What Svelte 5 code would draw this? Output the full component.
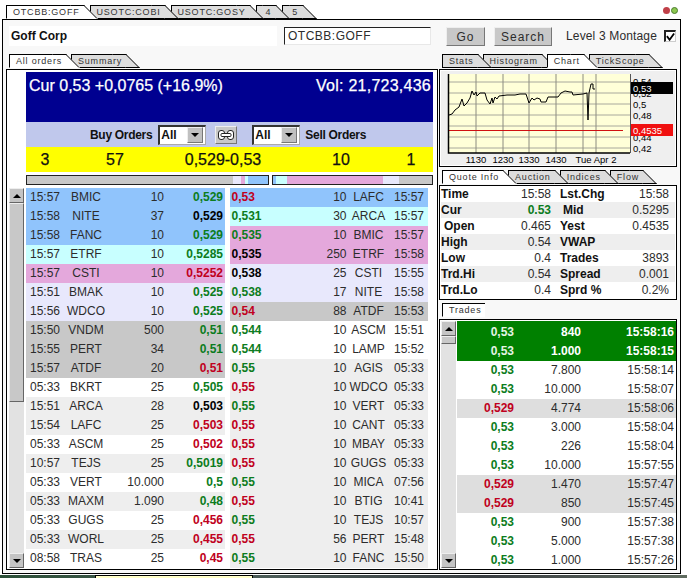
<script>
  const topTabs = ['OTCBB:GOFF', 'USOTC:COBI', 'USOTC:GOSY', '4', '5'];
  const chartTabs = ['Stats', 'Histogram', 'Chart', 'TickScope'];
  const quoteTabs = ['Quote Info', 'Auction', 'Indices', 'Flow'];

  // g = green, r = red, k = black
  const buys = [
    ['15:57', 'BMIC', '10', '0,529', 'g', 'blue'],
    ['15:58', 'NITE', '37', '0,529', 'k', 'blue'],
    ['15:58', 'FANC', '10', '0,529', 'g', 'blue'],
    ['15:57', 'ETRF', '10', '0,5285', 'g', 'cyan'],
    ['15:57', 'CSTI', '10', '0,5252', 'r', 'pink'],
    ['15:51', 'BMAK', '10', '0,525', 'g', 'lav'],
    ['15:56', 'WDCO', '10', '0,525', 'g', 'lav'],
    ['15:50', 'VNDM', '500', '0,51', 'g', 'gray'],
    ['15:55', 'PERT', '34', '0,51', 'g', 'gray'],
    ['15:57', 'ATDF', '20', '0,51', 'r', 'gray'],
    ['05:33', 'BKRT', '25', '0,505', 'g', 'white'],
    ['15:51', 'ARCA', '28', '0,503', 'k', 'alt'],
    ['15:54', 'LAFC', '25', '0,503', 'r', 'alt'],
    ['05:33', 'ASCM', '25', '0,502', 'r', 'white'],
    ['10:57', 'TEJS', '25', '0,5019', 'g', 'alt'],
    ['05:33', 'VERT', '10.000', '0,5', 'g', 'white'],
    ['05:33', 'MAXM', '1.090', '0,48', 'g', 'alt'],
    ['05:33', 'GUGS', '25', '0,456', 'r', 'white'],
    ['05:33', 'WORL', '25', '0,455', 'r', 'alt'],
    ['08:58', 'TRAS', '25', '0,45', 'r', 'white']
  ];

  const sells = [
    ['0,53', 'r', '10', 'LAFC', '15:57', 'blue'],
    ['0,531', 'g', '30', 'ARCA', '15:57', 'cyan'],
    ['0,535', 'g', '10', 'BMIC', '15:57', 'pink'],
    ['0,535', 'k', '250', 'ETRF', '15:58', 'pink'],
    ['0,538', 'k', '25', 'CSTI', '15:55', 'lav'],
    ['0,538', 'g', '17', 'NITE', '15:58', 'lav'],
    ['0,54', 'r', '88', 'ATDF', '15:53', 'gray'],
    ['0,544', 'g', '10', 'ASCM', '15:51', 'white'],
    ['0,544', 'g', '10', 'LAMP', '15:52', 'white'],
    ['0,55', 'g', '10', 'AGIS', '05:33', 'alt'],
    ['0,55', 'r', '10', 'WDCO', '05:33', 'alt'],
    ['0,55', 'g', '10', 'VERT', '05:33', 'alt'],
    ['0,55', 'r', '10', 'CANT', '05:33', 'alt'],
    ['0,55', 'r', '10', 'MBAY', '05:33', 'alt'],
    ['0,55', 'r', '10', 'GUGS', '05:33', 'alt'],
    ['0,55', 'g', '10', 'MICA', '07:56', 'alt'],
    ['0,55', 'r', '10', 'BTIG', '10:41', 'alt'],
    ['0,55', 'g', '10', 'TEJS', '10:57', 'alt'],
    ['0,55', 'r', '56', 'PERT', '15:48', 'alt'],
    ['0,55', 'g', '10', 'FANC', '15:50', 'alt']
  ];

  const quote = [
    ['Time', '15:58', 'Lst.Chg', '15:58'],
    ['Cur', '0.53', 'Mid', '0.5295'],
    ['Open', '0.465', 'Yest', '0.4535'],
    ['High', '0.54', 'VWAP', ''],
    ['Low', '0.4', 'Trades', '3893'],
    ['Trd.Hi', '0.54', 'Spread', '0.001'],
    ['Trd.Lo', '0.4', 'Sprd %', '0.2%']
  ];

  const trades = [
    ['0,53', '840', '15:58:16', 'hot'],
    ['0,53', '1.000', '15:58:15', 'hot'],
    ['0,53', '7.800', '15:58:14', ''],
    ['0,53', '10.000', '15:58:07', ''],
    ['0,529', '4.774', '15:58:06', 'down'],
    ['0,53', '3.000', '15:58:04', ''],
    ['0,53', '226', '15:58:04', ''],
    ['0,53', '10.000', '15:57:55', ''],
    ['0,529', '1.470', '15:57:47', 'down'],
    ['0,529', '850', '15:57:45', 'down'],
    ['0,53', '900', '15:57:38', ''],
    ['0,53', '5.000', '15:57:38', ''],
    ['0,53', '1.000', '15:57:26', '']
  ];

  const buyBar = [[207, '#c8c8c8'], [8, '#e8e8fc'], [4, '#e4a8dc'], [3, '#c8ffff'], [20, '#90c4fc']];
  const sellBar = [[3, '#90c4fc'], [11, '#c8ffff'], [97, '#e4a8dc'], [16, '#e8e8fc'], [33, '#c8c8c8']];

  const gridV = [476, 503, 529, 556, 583, 596];
  const gridH = [82, 93, 104, 115, 126, 137, 148];
  const xLabels = [[476, '1130'], [503, '1230'], [529, '1330'], [556, '1430'], [596, 'Tue Apr 2']];
  const yLabels = [[85, '0,54'], [97, '0,52'], [108, '0,5'], [119, '0,48'], [141, '0,44'], [152, '0,42']];
  const line =
    '449,115 452,114 455,110 459,107 462,99 464,106 467,103 470,98 472,91 474,95 476,92 477,96 480,93 485,93 ' +
    '487,100 490,104 492,98 493,103 495,97 497,99 499,96 507,95 515,95 520,94 526,94 529,103 532,98 534,100 ' +
    '537,98 540,99 541,102 546,102 548,97 558,97 561,93 565,91 570,92 572,92 573,95 583,94 587,93 588,120 ' +
    '589,93 591,84 593,84 593,89 595,89';
</script>

<div class="app">
  <div class="topbar">
    <div class="tabs top">
      {#each topTabs as t, i}
        <div class="tab" class:on={i === 0} class:short={t.length === 1} style="z-index: {10 - i}">{t}</div>
      {/each}
    </div>
    <div class="dots"><span class="dot red"></span><span class="dot green"></span></div>
  </div>

  <div class="window">
    <div class="header">
      <div class="name">Goff Corp</div>
      <div class="symbol">OTCBB:GOFF</div>
      <div class="btn go">Go</div>
      <div class="btn search">Search</div>
      <div class="montage">Level 3 Montage</div>
      <div class="check">
        <svg width="10" height="10" viewBox="0 0 10 10"><path d="M1 4 L4 8 L9 1" fill="none" stroke="#000" stroke-width="2" /></svg>
      </div>
    </div>

    <div class="body">
      <div class="col">
        <div class="tabs">
          <div class="tab on" style="z-index: 5">All orders</div>
          <div class="tab" style="z-index: 4">Summary</div>
        </div>
        <div class="frame orders">
          <div class="cur">
            <span>Cur 0,53 +0,0765 (+16.9%)</span>
            <span class="vol">Vol: 21,723,436</span>
          </div>
          <div class="filters">
            <b>Buy Orders</b>
            <div class="select"><b>All</b><span class="drop"><i class="down-arrow"></i></span></div>
            <div class="link">
              <svg width="16" height="10" viewBox="0 0 16 10" fill="#fff" stroke="#222" stroke-width="1">
                <rect x="0.5" y="0.5" width="6" height="9" rx="2.5" />
                <rect x="9.5" y="0.5" width="6" height="9" rx="2.5" />
                <rect x="3" y="3.5" width="10" height="3" rx="1" />
              </svg>
            </div>
            <div class="select"><b>All</b><span class="drop"><i class="down-arrow"></i></span></div>
            <b>Sell Orders</b>
          </div>
          <div class="best">
            <span>3</span><span>57</span><span>0,529-0,53</span><span>10</span><span>1</span>
          </div>
          <div class="bars">
            <div class="bar buy">
              {#each buyBar as [w, c]}<span style="flex-grow: {w}; background: {c}"></span>{/each}
            </div>
            <div class="bar sell">
              {#each sellBar as [w, c]}<span style="flex-grow: {w}; background: {c}"></span>{/each}
            </div>
          </div>
          <div class="book">
            <div class="scroll left">
              <div class="arrow"><i class="up-arrow"></i></div>
              <div class="thumb"></div>
              <div class="rest"></div>
              <div class="arrow"><i class="down-arrow"></i></div>
            </div>
            <div class="side">
              {#each buys as [time, mm, qty, price, tone, bg]}
                <div class="row buyrow {bg}">
                  <span>{time}</span>
                  <span class="mid">{mm}</span>
                  <span class="end">{qty}</span>
                  <b class="end {tone}">{price}</b>
                </div>
              {/each}
            </div>
            <div class="side">
              {#each sells as [price, tone, qty, mm, time, bg]}
                <div class="row sellrow {bg}">
                  <b class={tone}>{price}</b>
                  <span class="end">{qty}</span>
                  <span class="mid">{mm}</span>
                  <span class="mid">{time}</span>
                </div>
              {/each}
            </div>
          </div>
        </div>
      </div>

      <div class="col">
        <div class="tabs">
          {#each chartTabs as t, i}
            <div class="tab" class:on={t === 'Chart'} style="z-index: {t === 'Chart' ? 9 : 5 - i}">{t}</div>
          {/each}
        </div>
        <div class="frame chart">
          <svg width="234" height="94" viewBox="441 71 234 94">
            <rect x="448" y="74" width="182" height="79" fill="#ffffd8" />
            {#each gridH as y}<path d="M448 {y}H630" stroke="#a8a89c" />{/each}
            {#each gridV as x}<path d="M{x} 74V153" stroke="#8c8c80" />{/each}
            <path d="M449 130.5H623" stroke="#d01010" />
            <polyline points={line} fill="none" stroke="#000" />
            <path d="M448.5 74V153H630" fill="none" stroke="#000" stroke-width="1.5" />
            <path d="M630.5 74V153" stroke="#555" />
            {#each xLabels as [x, t]}<text class="axis" {x} y="163" text-anchor="middle">{t}</text>{/each}
            {#each yLabels as [y, t]}<text class="axis" x="633" {y}>{t}</text>{/each}
            <rect x="631" y="82" width="42" height="12" fill="#000" />
            <text class="axis" x="633" y="92" fill="#fff">0,53</text>
            <rect x="631" y="124" width="42" height="12" fill="#f01010" />
            <text class="axis" x="633" y="134" fill="#fff">0,4535</text>
          </svg>
        </div>

        <div class="tabs next">
          {#each quoteTabs as t, i}
            <div class="tab" class:on={i === 0} style="z-index: {9 - i}">{t}</div>
          {/each}
        </div>
        <div class="frame quote">
          {#each quote as [a, b, c, d], i}
            <div class="qrow" class:alt={i % 2 === 1}>
              <b class:indent={a === 'Open'}>{a}</b>
              <span class="end" class:g={a === 'Cur'} class:strong={a === 'Cur'}>{b}</span>
              <b class:indent={c === 'Mid'}>{c}</b>
              <span class="end">{d}</span>
            </div>
          {/each}
        </div>

        <div class="tabs next">
          <div class="tab on">Trades</div>
        </div>
        <div class="frame trades">
          <div class="scroll right">
            <div class="arrow"><i class="up-arrow"></i></div>
            <div class="thumb small"></div>
            <div class="rest"></div>
            <div class="arrow"><i class="down-arrow"></i></div>
          </div>
          <div class="tlist">
            {#each trades as [price, qty, time, kind], i}
              <div class="trow {kind}" class:first={i === 0}>
                <b class="end {kind === 'down' ? 'r' : 'g'}">{price}</b>
                <span class="end">{qty}</span>
                <span class="end">{time}</span>
              </div>
            {/each}
          </div>
        </div>
      </div>
    </div>
  </div>

  <div class="taskbar"><div class="tip"></div></div>
</div>

<style>
  :global(body) {
    margin: 0;
    background: #fff;
  }

  .app {
    width: 687px;
    height: 578px;
    overflow: hidden;
    position: relative;
    font-family: "Liberation Sans", Arial, sans-serif;
    font-size: 12px;
    color: #2c2c2c;
    display: flex;
    flex-direction: column;
  }

  b {
    color: #111;
  }

  .topbar {
    height: 19px;
    display: flex;
    justify-content: space-between;
    box-sizing: border-box;
    padding: 5px 9px 0 6px;
  }

  .dots {
    display: flex;
    gap: 1px;
    padding-top: 2px;
  }

  .dot {
    width: 7px;
    height: 7px;
    border-radius: 50%;
  }

  .dot.red {
    background: #c04048;
  }

  .dot.green {
    background: #8cc850;
    border: 1px solid #4c7c30;
    box-sizing: border-box;
  }

  .tabs {
    display: flex;
    height: 14px;
    padding-left: 3px;
    font-size: 9px;
    letter-spacing: 0.8px;
  }

  .tabs.top {
    padding-left: 0;
  }

  .tab {
    position: relative;
    height: 14px;
    line-height: 13px;
    box-sizing: border-box;
    padding: 0 4px 0 6px;
    margin-right: 5px;
    background: #ddd;
    border-top: 1px solid #000;
    border-left: 1px solid #000;
    border-bottom: 1px solid #000;
    white-space: nowrap;
    color: #333;
  }

  .top .tab {
    margin-right: 6px;
  }

  .top .tab.short {
    padding: 0 5px 0 9px;
  }

  .tab::after {
    content: "";
    position: absolute;
    top: -1px;
    bottom: -1px;
    right: -7px;
    width: 14px;
    background: #ddd;
    border-top: 1px solid #000;
    border-right: 1px solid #000;
    border-bottom: 1px solid #000;
    box-sizing: border-box;
    transform: skewX(45deg);
    z-index: -1;
  }

  .tab.on,
  .tab.on::after {
    background: #fff;
    border-bottom-color: #fff;
  }

  .window {
    height: 555px;
    margin: 0 6px 0 2px;
    box-sizing: border-box;
    background: #f8f8f8;
    border: 1px solid #000;
    padding: 0 3px;
  }

  .header {
    height: 34px;
    display: flex;
    align-items: flex-start;
    padding-top: 6px;
    box-sizing: border-box;
  }

  .name {
    width: 268px;
    height: 20px;
    line-height: 20px;
    margin: 0 7px 0 3px;
    padding-left: 2px;
    box-sizing: border-box;
    background: #fff;
    font-weight: bold;
    color: #111;
  }

  .symbol {
    width: 147px;
    height: 18px;
    line-height: 16px;
    margin-top: 1px;
    padding-left: 3px;
    box-sizing: border-box;
    background: #fff;
    border: 1px solid #e8e8e8;
    border-top-color: #222;
    border-left-color: #222;
    letter-spacing: 0.5px;
  }

  .btn {
    height: 19px;
    line-height: 18px;
    margin-top: 1px;
    text-align: center;
    box-sizing: border-box;
    background: #c8c8c8;
    border: 1px solid #777;
    border-top-color: #eee;
    border-left-color: #eee;
    letter-spacing: 1px;
  }

  .go {
    width: 39px;
    margin-left: 15px;
  }

  .search {
    width: 58px;
    margin-left: 9px;
  }

  .montage {
    margin: 2px 0 0 14px;
    line-height: 16px;
    letter-spacing: 0.15px;
    white-space: nowrap;
  }

  .check {
    width: 12px;
    height: 12px;
    margin: 4px 0 0 7px;
    flex: none;
    box-sizing: border-box;
    background: #fff;
    border: 1px solid #ccc;
    border-top: 2px solid #222;
    border-left: 2px solid #222;
    display: flex;
  }

  .body {
    display: grid;
    grid-template-columns: 432px 238px;
    column-gap: 1px;
  }

  .col {
    display: flex;
    flex-direction: column;
  }

  .frame {
    box-sizing: border-box;
    border: 1px solid #000;
    margin-top: 1px;
  }

  .orders {
    height: 501px;
    background: #fff;
    padding: 2px 4px 0 19px;
  }

  .cur {
    height: 50px;
    box-sizing: border-box;
    background: #000090;
    color: #fff;
    font-size: 16px;
    -webkit-text-stroke: 0.25px #fff;
    display: flex;
    justify-content: space-between;
    padding: 4px 2px 0 3px;
    line-height: 20px;
  }

  .vol {
    letter-spacing: 0.25px;
  }

  .filters {
    height: 25px;
    background: #c0c8ec;
    display: flex;
    align-items: center;
    padding-left: 64px;
  }

  .filters > b {
    letter-spacing: -0.3px;
  }

  .select {
    width: 48px;
    height: 20px;
    margin: 0 9px 0 6px;
    box-sizing: border-box;
    background: #fff;
    border: 1px solid #aaa;
    border-top: 2px solid #333;
    border-left: 2px solid #333;
    display: flex;
    justify-content: space-between;
    align-items: center;
    padding-left: 1px;
  }

  .link + .select {
    margin-left: 15px;
    margin-right: 5px;
  }

  .drop {
    width: 16px;
    height: 16px;
    margin-right: 2px;
    background: #c0c0c0;
    border: 1px solid #777;
    border-top-color: #eee;
    border-left-color: #eee;
    box-sizing: border-box;
    display: flex;
    align-items: center;
    justify-content: center;
  }

  .link {
    width: 22px;
    height: 18px;
    box-sizing: border-box;
    background: #c8c8c8;
    border: 1px solid #777;
    border-top-color: #eee;
    border-left-color: #eee;
    display: flex;
    align-items: center;
    justify-content: center;
  }

  .best {
    height: 25px;
    background: #ff0;
    display: grid;
    grid-template-columns: 38px 102px 114px 122px 18px 13px;
    font-size: 16px;
    line-height: 26px;
    text-align: center;
    color: #111;
    -webkit-text-stroke: 0.25px #111;
  }

  .bars {
    display: flex;
    gap: 3px;
    margin: 3px 0;
    height: 10px;
  }

  .bar {
    display: flex;
    box-sizing: border-box;
    border: 1px solid #222;
  }

  .bar.buy {
    width: 243px;
  }

  .bar.sell {
    width: 161px;
  }

  .book {
    display: flex;
    margin-left: -17px;
    height: 380px;
  }

  .scroll {
    width: 15px;
    display: flex;
    flex-direction: column;
    flex: none;
  }

  .scroll.left {
    margin-right: 2px;
  }

  .arrow {
    height: 15px;
    flex: none;
    box-sizing: border-box;
    background: #c4c4c4;
    border: 1px solid #666;
    border-top-color: #eee;
    border-left-color: #eee;
    display: flex;
    align-items: center;
    justify-content: center;
  }

  .thumb {
    height: 199px;
    box-sizing: border-box;
    background: #c8c8c8;
    border: 1px solid #666;
    border-top-color: #eee;
    border-left-color: #eee;
  }

  .thumb.small {
    height: 8px;
  }

  .rest {
    flex: 1;
    background: #e2e2e2;
  }

  .up-arrow,
  .down-arrow {
    width: 0;
    height: 0;
    border-left: 4px solid transparent;
    border-right: 4px solid transparent;
  }

  .up-arrow {
    border-bottom: 4px solid #000;
  }

  .down-arrow {
    border-top: 4px solid #000;
  }

  .side {
    width: 200px;
    margin-right: 5px;
  }

  .row {
    height: 19px;
    line-height: 19px;
    display: grid;
    box-sizing: border-box;
  }

  .buyrow {
    grid-template-columns: 32px 48px 54px 59px;
    padding-left: 4px;
  }

  .sellrow {
    grid-template-columns: 60px 55px 44px 37px;
    padding-left: 2px;
  }

  .mid {
    text-align: center;
  }

  .end {
    text-align: right;
  }

  .blue {
    background: #90c4fc;
  }

  .cyan {
    background: #c8ffff;
  }

  .pink {
    background: #e4a8dc;
  }

  .lav {
    background: #e8e8fc;
  }

  .gray {
    background: #c8c8c8;
  }

  .white {
    background: #fff;
  }

  .alt {
    background: #eee;
  }

  .g {
    color: #0c7c20;
  }

  .r {
    color: #c00020;
  }

  .k {
    color: #000;
  }

  .chart {
    height: 98px;
    background: #fff;
    padding: 1px;
    overflow: hidden;
  }

  .chart svg {
    display: block;
    background: #efefef;
  }

  .axis {
    font-size: 9.5px;
    font-family: "Liberation Sans", Arial, sans-serif;
  }

  .next {
    margin-top: 3px;
  }

  .quote {
    height: 115px;
    background: #fff;
    padding: 0 1px;
  }

  .qrow {
    height: 16px;
    line-height: 16px;
    display: grid;
    grid-template-columns: 40px 70px 48px 70px;
  }

  .qrow b {
    white-space: nowrap;
  }

  .qrow b:nth-child(3) {
    padding-left: 9px;
  }

  .qrow .indent {
    padding-left: 3px;
  }

  .qrow b.indent:nth-child(3) {
    padding-left: 12px;
  }

  .strong {
    font-weight: bold;
  }

  .trades {
    height: 251px;
    margin-top: 2px;
    background: #fff;
    display: flex;
    padding: 1px 0 0 1px;
    overflow: hidden;
  }

  .scroll.right {
    height: 247px;
    margin-right: 1px;
  }

  .tlist {
    width: 219px;
  }

  .trow {
    height: 19px;
    line-height: 19px;
    display: grid;
    grid-template-columns: 57px 67px 93px;
  }

  .trow.first {
    height: 21px;
    padding-top: 2px;
    box-sizing: border-box;
  }

  .trow.down {
    background: #dedede;
  }

  .trow.hot {
    background: #008000;
    color: #fff;
    font-weight: bold;
  }

  .trow.hot b {
    color: #e4f4e4;
  }

  .taskbar {
    flex: 1;
    background: linear-gradient(90deg, #2c5038, #4c5c58 40%, #383c40 70%, #606c60);
    border-top: 1px solid #fff;
    position: relative;
  }

  .tip {
    position: absolute;
    left: 95px;
    top: 0;
    width: 158px;
    height: 4px;
    box-sizing: border-box;
    background: #ffffc8;
    border: 1px solid #000;
    border-bottom: 0;
  }
</style>
